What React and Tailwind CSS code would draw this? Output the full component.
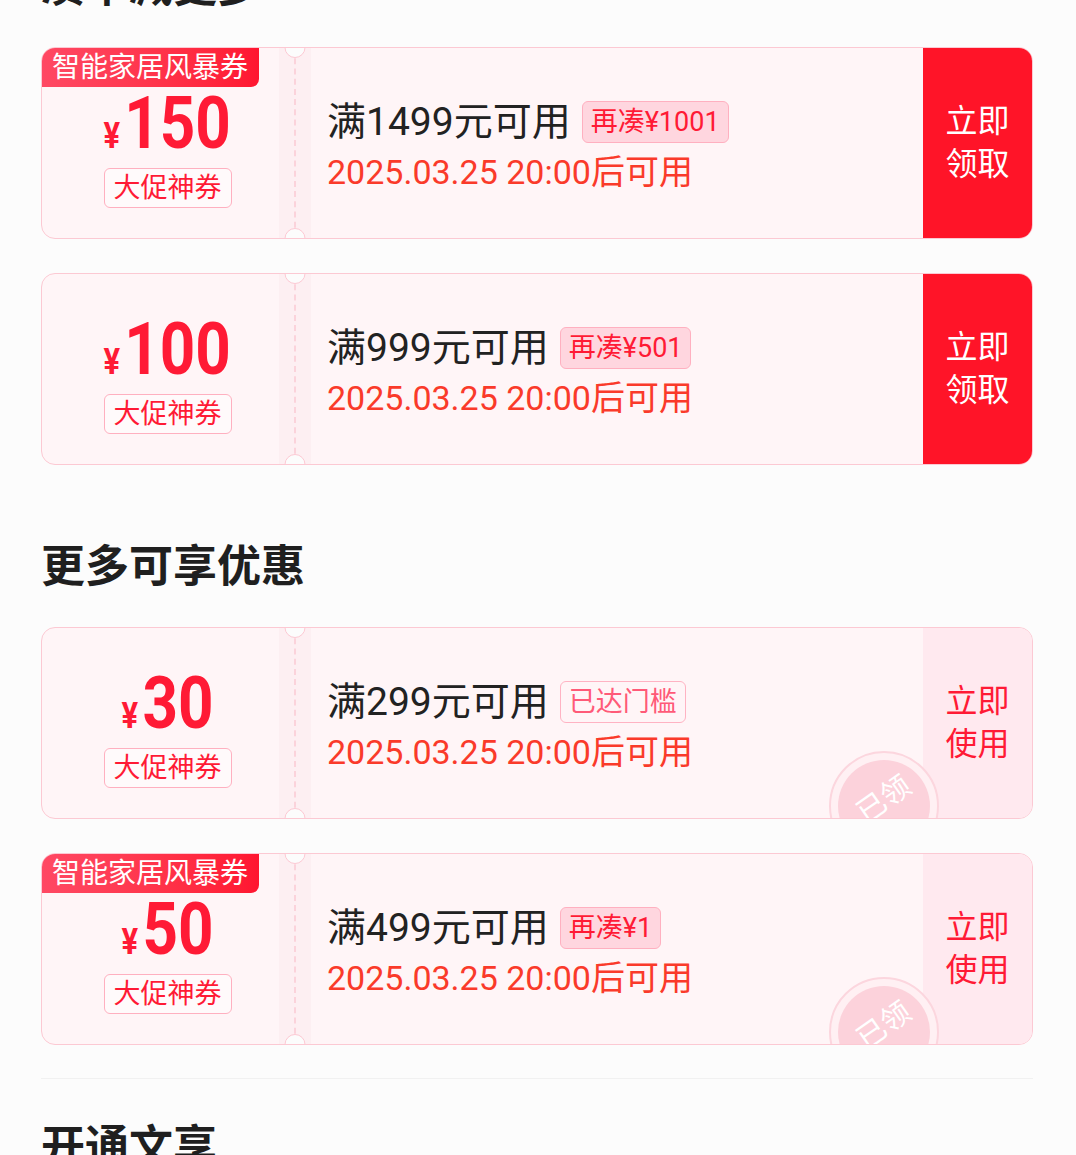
import clsx from 'clsx';

const FONT = "font-['Roboto','Noto_Sans_CJK_SC',sans-serif]";

const COUPONS_TOP = [
    { tag: '智能家居风暴券', amount: '150', cond: '满1499元可用', chip: '再凑¥1001', claimed: false },
    { tag: null, amount: '100', cond: '满999元可用', chip: '再凑¥501', claimed: false },
];

const COUPONS_MORE = [
    { tag: null, amount: '30', cond: '满299元可用', chip: '已达门槛', reached: true, claimed: true },
    { tag: '智能家居风暴券', amount: '50', cond: '满499元可用', chip: '再凑¥1', claimed: true },
];

const Coupon = ({ c }) => (
    <div className="relative flex h-[192px] overflow-hidden rounded-[14px] border border-[#fcc9d3] bg-[#fff5f7]">
        {/* Series tag */}
        {c.tag && (
            <div className="absolute left-0 top-0 z-10 flex h-[39px] w-[217px] items-center rounded-br-[8px] bg-gradient-to-r from-[#ff4863] to-[#ff1530] pl-[10px] text-[28px] leading-none text-white">
                {c.tag}
            </div>
        )}

        {/* Amount stub */}
        <div className="flex w-[237px] shrink-0 flex-col items-center pl-[14px] pt-[40px]">
            <div className="flex scale-x-[0.86] items-baseline leading-none text-[#ff1a35]">
                <span className="mr-[5px] text-[36px] font-bold">¥</span>
                <span className="text-[72px] font-bold">{c.amount}</span>
            </div>
            <div className="mt-[8px] flex h-[40px] items-center rounded-[6px] border border-[#ffb0c0] bg-[#fffafb] px-[9px] text-[27px] leading-none text-[#ff1a35]">
                大促神券
            </div>
        </div>

        {/* Perforation */}
        <div className="relative flex w-[32px] shrink-0 justify-center bg-[#fdeff2]">
            <div className="h-full border-l-2 border-dashed border-[#fbd3db]"></div>
            <div className="absolute -top-[11px] left-1/2 h-[21px] w-[21px] -translate-x-1/2 rounded-full border border-[#fcc9d3] bg-[#fcfcfc]"></div>
            <div className="absolute -bottom-[11px] left-1/2 h-[21px] w-[21px] -translate-x-1/2 rounded-full border border-[#fcc9d3] bg-[#fcfcfc]"></div>
        </div>

        {/* Condition */}
        <div className="flex flex-1 flex-col justify-center pl-[16px] pt-[6px]">
            <div className="flex h-[48px] items-center">
                <span className="text-[39px] leading-none text-[#222]">{c.cond}</span>
                <span
                    className={clsx(
                        'ml-[11px] flex h-[42px] items-center rounded-[6px] border px-[8px] text-[27px] leading-none',
                        c.reached
                            ? 'border-[#ffb3c3] text-[#ff5a78]'
                            : 'border-[#ffb0c0] bg-[#ffd6df] text-[#ff1a35]'
                    )}
                >
                    {c.chip}
                </span>
            </div>
            <div className="mt-[4px] text-[34px] leading-[44px] text-[#fa3a2a]">2025.03.25 20:00后可用</div>
        </div>

        {/* Action */}
        <div
            className={clsx(
                'flex w-[109px] shrink-0 flex-col items-center justify-center text-[32px] leading-[43px]',
                c.claimed ? 'bg-[#ffe9ef] text-[#ff1a35]' : 'bg-[#ff1428] text-white'
            )}
        >
            <span>立即</span>
            <span>{c.claimed ? '使用' : '领取'}</span>
        </div>

        {/* Claimed stamp */}
        {c.claimed && (
            <div className="absolute -bottom-[43px] right-[93px] flex h-[110px] w-[110px] items-center justify-center rounded-full border-2 border-[#fcd6de] bg-[#fff0f3]">
                <div className="flex h-[92px] w-[92px] items-center justify-center rounded-full bg-[#fcd2db]">
                    <span className="-mt-[14px] -rotate-[35deg] text-[29px] leading-none text-white">已领</span>
                </div>
            </div>
        )}
    </div>
);

const Heading = ({ children, className }) => (
    <h2 className={clsx('text-[44px] font-bold leading-[52px] text-[#1f1f1f]', className)}>{children}</h2>
);

export default function App() {
    return (
        <div className={clsx('min-h-[1155px] overflow-hidden bg-[#fcfcfc]', FONT)}>
            <div className="-mt-[39px] pl-[41px] pr-[43px]">
                <Heading>凑单减更多</Heading>
                <div className="mt-[34px] flex flex-col gap-[34px]">
                    {COUPONS_TOP.map((c, i) => <Coupon key={i} c={c} />)}
                </div>

                <Heading className="mt-[76px]">更多可享优惠</Heading>
                <div className="mt-[34px] flex flex-col gap-[34px] border-b border-[#f1f1f1] pb-[33px]">
                    {COUPONS_MORE.map((c, i) => <Coupon key={i} c={c} />)}
                </div>

                <Heading className="mt-[42px]">开通文享</Heading>
            </div>
        </div>
    );
}
